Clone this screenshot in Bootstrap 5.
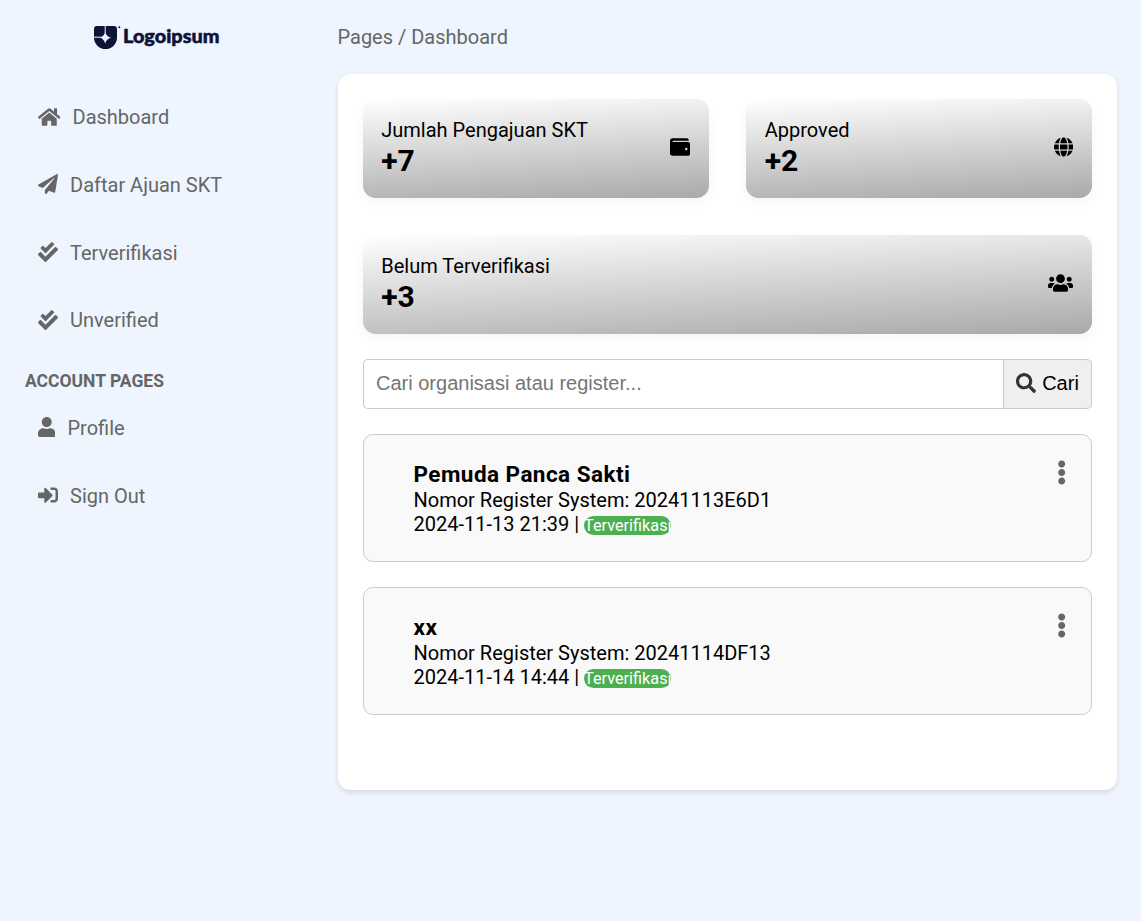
<!DOCTYPE html>
<html lang="id">
<head>
<meta charset="utf-8">
<meta name="viewport" content="width=device-width, initial-scale=1">
<title>Dashboard</title>
<link href="https://cdn.jsdelivr.net/npm/bootstrap@5.3.0/dist/css/bootstrap.min.css" rel="stylesheet">
<style>
  body { min-height: 100vh; background: #eef5ff; color: #000; font-family: Roboto, sans-serif; font-size: 20px; line-height: 24px; }
  .fa-glyph { height: 1em; fill: currentColor; flex: none; display: block; margin-bottom: 1px; }
  .side { width: 312.5px; padding: 0 25px; color: #666; }
  .brand { height: 74px; padding: 24px 0 0 68px; }
  .side .nav-link { color: #666; height: 67.7px; padding: 0 12.5px; gap: 12.5px; }
  .side-nav { padding-top: 9.4px; }
  .side-title { font-size: 17.5px; line-height: 20px; font-weight: 700; padding-top: 17px; margin-bottom: 3px; }
  .content { padding: 0 24px 0 25px; }
  .crumb { height: 74px; color: #666; }
  .panel { background: #fff; border-radius: 12.5px; padding: 25px; height: 716px; box-shadow: 0 2.5px 5px rgba(0,0,0,.1); }
  .stats { display: grid; grid-template-columns: 1fr 1fr; gap: 37.5px; }
  .stat { height: 98.5px; padding: 0 18.75px; border-radius: 12.5px; background: linear-gradient(177deg, #fff, #a9a9a9); box-shadow: 0 5px 12px rgba(0,0,0,.04); }
  .stat .fa-glyph { margin-bottom: 2.5px; }
  .stat-all { grid-column: 1 / -1; }
  .stat-value { font-size: 30px; line-height: 36px; font-weight: 700; padding-top: 1px; margin-bottom: -1px; }
  .search { height: 50px; margin: 25px 0; }
  .search .form-control { border: 1px solid #ccc; border-right: 0; border-radius: 5px 0 0 5px; font: 20px "Liberation Sans", sans-serif; padding: 0 12.5px 1px; color: #000; }
  .search .form-control::placeholder { color: #757575; }
  .search .btn { width: 89px; border: 1px solid #ccc; border-radius: 0 5px 5px 0; background: #efefef; color: #000; font: 20px "Liberation Sans", sans-serif; padding: 0 0 1px; gap: 6px; }
  .search .btn svg { color: #333; margin-bottom: 1px; }
  .org { height: 128px; margin-bottom: 25px; padding: 25px 22px 0 50px; border: 1px solid #ccc; border-radius: 10px; background: #f9f9f9; }
  .org-name { font-size: 22.5px; line-height: 28px; font-weight: 700; margin: 0; letter-spacing: .45px; }
  .org-more { font-size: 25px; color: #666; padding: 0; border: 0; background: none; height: 25px; width: 12px; }
  .tag { display: inline-block; width: 87px; height: 19px; border-radius: 10px; background: #4caf50; color: #fff; font-size: 16.25px; line-height: 19px; vertical-align: 0; margin-bottom: -4px; white-space: nowrap; }
</style>
</head>
<body>
<svg class="d-none">
  <symbol id="check" viewBox="0 0 512 512"><path d="M505 174.8l-39.6-39.6c-9.4-9.4-24.6-9.4-33.9 0L192 374.7 80.6 263.2c-9.4-9.4-24.6-9.4-33.9 0L7 302.9c-9.4 9.4-9.4 24.6 0 34L175 505c9.4 9.4 24.6 9.4 33.9 0l296-296.2c9.4-9.5 9.4-24.7.1-34zm-324.3 106c6.2 6.3 16.4 6.3 22.6 0l208-208.2c6.2-6.3 6.2-16.4 0-22.6L366.1 4.7c-6.2-6.3-16.4-6.3-22.6 0L192 156.2l-55.4-55.5c-6.2-6.3-16.4-6.3-22.6 0L68.7 146c-6.2 6.3-6.2 16.4 0 22.6l112 112.2z"/></symbol>
  <symbol id="dots" viewBox="0 0 192 512"><path d="M96 184c39.8 0 72 32.2 72 72s-32.2 72-72 72-72-32.2-72-72 32.2-72 72-72zM24 80c0 39.8 32.2 72 72 72s72-32.2 72-72S135.8 8 96 8 24 40.2 24 80zm0 352c0 39.8 32.2 72 72 72s72-32.2 72-72-32.2-72-72-72-72 32.2-72 72z"/></symbol>
</svg>
<div class="d-flex">
  <aside class="side flex-shrink-0">
    <div class="brand">
      <svg width="128" height="26" viewBox="0 0 128 26" class="d-block">
        <path fill="#0e1437" d="M4 2h17a3 3 0 0 1 3 3v8.500a11.500 11.500 0 0 1-23 0V5a3 3 0 0 1 3-3z"/>
        <path fill="none" stroke="#eef5ff" stroke-width="1" d="M12.200 1v8M0 13.200h8"/>
        <path fill="#eef5ff" d="M12.200 7.500Q13 12.600 18.200 13.700Q13.300 14.800 12.200 19.600Q11.100 14.800 6.500 13.500Q11.300 12.600 12.200 7.500z"/>
        <circle cx="26.300" cy="3.200" r="1" fill="#0e1437"/>
        <text x="30" y="19.200" textLength="96.500" lengthAdjust="spacingAndGlyphs" font-family="Lato, sans-serif" font-weight="900" font-size="18" fill="#0e1437" stroke="#0e1437" stroke-width=".5" stroke-linejoin="round">Logoipsum</text>
      </svg>
    </div>
    <nav class="nav flex-column side-nav">
      <a class="nav-link d-flex align-items-center" href="#"><svg class="fa-glyph" viewBox="0 0 576 512"><path d="M280.37 148.26L96 300.11V464a16 16 0 0 0 16 16l112.06-.29a16 16 0 0 0 15.92-16V368a16 16 0 0 1 16-16h64a16 16 0 0 1 16 16v95.640a16 16 0 0 0 16 16.050L464 480a16 16 0 0 0 16-16V300L295.670 148.260a12.190 12.190 0 0 0-15.300 0zM571.600 251.470L488 182.560V44.050a12 12 0 0 0-12-12h-56a12 12 0 0 0-12 12v72.610L318.470 43a48 48 0 0 0-61 0L4.340 251.470a12 12 0 0 0-1.600 16.900l25.500 31A12 12 0 0 0 45.150 301l235.220-193.740a12.190 12.190 0 0 1 15.300 0L530.900 301a12 12 0 0 0 16.900-1.600l25.500-31a12 12 0 0 0-1.700-16.930z"/></svg>Dashboard</a>
      <a class="nav-link d-flex align-items-center" href="#"><svg class="fa-glyph" viewBox="0 0 512 512"><path d="M476 3.200L12.500 270.600c-18.100 10.400-15.800 35.600 2.200 43.200L121 358.400l287.300-253.200c5.500-4.900 13.300 2.600 8.600 8.300L176 407v80.500c0 23.600 28.500 32.900 42.500 15.800L282 426l124.600 52.200c14.200 6 30.400-2.900 33-18.200l72-432C515 7.800 493.300-6.800 476 3.200z"/></svg>Daftar Ajuan SKT</a>
      <a class="nav-link d-flex align-items-center" href="#"><svg class="fa-glyph" viewBox="0 0 512 512"><use href="#check"/></svg>Terverifikasi</a>
      <a class="nav-link d-flex align-items-center" href="#"><svg class="fa-glyph" viewBox="0 0 512 512"><use href="#check"/></svg>Unverified</a>
    </nav>
    <div class="side-title">ACCOUNT PAGES</div>
    <nav class="nav flex-column">
      <a class="nav-link d-flex align-items-center" href="#"><svg class="fa-glyph" viewBox="0 0 448 512"><path d="M224 256c70.700 0 128-57.300 128-128S294.700 0 224 0 96 57.300 96 128s57.300 128 128 128zm89.600 32h-16.700c-22.200 10.200-46.900 16-72.900 16s-50.600-5.800-72.900-16h-16.700C60.200 288 0 348.200 0 422.400V464c0 26.500 21.500 48 48 48h352c26.500 0 48-21.500 48-48v-41.600c0-74.200-60.200-134.400-134.400-134.400z"/></svg>Profile</a>
      <a class="nav-link d-flex align-items-center" href="#"><svg class="fa-glyph" viewBox="0 0 512 512"><path d="M416 448h-84c-6.600 0-12-5.400-12-12v-40c0-6.600 5.400-12 12-12h84c17.700 0 32-14.300 32-32V160c0-17.700-14.300-32-32-32h-84c-6.600 0-12-5.400-12-12V76c0-6.600 5.400-12 12-12h84c53 0 96 43 96 96v192c0 53-43 96-96 96zm-47-201L201 79c-15-15-41-4.500-41 17v96H24c-13.300 0-24 10.700-24 24v96c0 13.300 10.700 24 24 24h136v96c0 21.500 26 32 41 17l168-168c9.300-9.400 9.300-24.600 0-34z"/></svg>Sign Out</a>
    </nav>
  </aside>
  <main class="content flex-grow-1">
    <div class="crumb d-flex align-items-center">Pages / Dashboard</div>
    <section class="panel">
      <div class="stats">
        <div class="stat d-flex align-items-center justify-content-between">
          <div><div>Jumlah Pengajuan SKT</div><div class="stat-value">+7</div></div>
          <svg class="fa-glyph" viewBox="0 0 512 512"><path d="M461.200 128H80c-8.840 0-16-7.160-16-16s7.160-16 16-16h384c8.840 0 16-7.160 16-16 0-26.510-21.490-48-48-48H64C28.650 32 0 60.650 0 96v320c0 35.350 28.650 64 64 64h397.200c28.020 0 50.800-21.530 50.800-48V176c0-26.470-22.780-48-50.800-48zM416 336c-17.670 0-32-14.330-32-32s14.330-32 32-32 32 14.330 32 32-14.330 32-32 32z"/></svg>
        </div>
        <div class="stat d-flex align-items-center justify-content-between">
          <div><div>Approved</div><div class="stat-value">+2</div></div>
          <svg class="fa-glyph" viewBox="0 0 496 512"><path d="M336.500 160C322 70.700 287.800 8 248 8s-74 62.700-88.500 152h177zM152 256c0 22.200 1.200 43.500 3.300 64h185.300c2.100-20.500 3.300-41.800 3.300-64s-1.200-43.500-3.300-64H155.300c-2.100 20.500-3.300 41.800-3.300 64zm324.700-96c-28.600-67.900-86.500-120.400-158-141.600 24.400 33.800 41.200 84.700 50 141.600h108zM177.200 18.400C105.800 39.600 47.800 92.100 19.300 160h108c8.700-56.900 25.500-107.800 49.900-141.600zM487.400 192H372.700c2.100 21 3.300 42.500 3.300 64s-1.200 43-3.300 64h114.600c5.500-20.500 8.600-41.800 8.600-64s-3.100-43.500-8.500-64zM120 256c0-21.500 1.200-43 3.300-64H8.600C3.200 212.500 0 233.800 0 256s3.200 43.500 8.600 64h114.600c-2-21-3.200-42.500-3.200-64zm39.500 96c14.500 89.300 48.700 152 88.500 152s74-62.700 88.500-152h-177zm159.300 141.600c71.400-21.200 129.400-73.700 158-141.600h-108c-8.800 56.900-25.600 107.800-50 141.600zM19.300 352c28.600 67.900 86.500 120.400 158 141.600-24.400-33.800-41.200-84.700-50-141.600h-108z"/></svg>
        </div>
        <div class="stat stat-all d-flex align-items-center justify-content-between">
          <div><div>Belum Terverifikasi</div><div class="stat-value">+3</div></div>
          <svg class="fa-glyph" viewBox="0 0 640 512"><path d="M96 224c35.300 0 64-28.700 64-64s-28.700-64-64-64-64 28.700-64 64 28.700 64 64 64zm448 0c35.300 0 64-28.700 64-64s-28.700-64-64-64-64 28.700-64 64 28.700 64 64 64zm32 32h-64c-17.600 0-33.500 7.100-45.100 18.600 40.300 22.100 68.900 62 75.100 109.400h66c17.700 0 32-14.300 32-32v-32c0-35.300-28.700-64-64-64zm-256 0c61.900 0 112-50.100 112-112S381.900 32 320 32 208 82.100 208 144s50.100 112 112 112zm76.800 32h-8.300c-20.800 10-43.900 16-68.500 16s-47.600-6-68.500-16h-8.300C179.600 288 128 339.600 128 403.200V432c0 26.500 21.500 48 48 48h288c26.500 0 48-21.500 48-48v-28.800c0-63.600-51.600-115.200-115.200-115.200zm-223.700-13.400C161.500 263.100 145.600 256 128 256H64c-35.300 0-64 28.700-64 64v32c0 17.700 14.300 32 32 32h65.900c6.300-47.400 34.900-87.300 75.200-109.400z"/></svg>
        </div>
      </div>
      <form class="search d-flex">
        <input class="form-control shadow-none" type="text" placeholder="Cari organisasi atau register...">
        <button class="btn d-flex align-items-center justify-content-center flex-shrink-0" type="button"><svg class="fa-glyph" viewBox="0 0 512 512"><path d="M505 442.700L405.300 343c-4.500-4.500-10.600-7-17-7H372c27.600-35.300 44-79.700 44-128C416 93.100 322.900 0 208 0S0 93.100 0 208s93.100 208 208 208c48.300 0 92.700-16.400 128-44v16.300c0 6.400 2.500 12.500 7 17l99.700 99.700c9.400 9.400 24.600 9.400 33.900 0l28.300-28.300c9.400-9.400 9.400-24.600.1-34zM208 336c-70.700 0-128-57.200-128-128 0-70.700 57.200-128 128-128 70.700 0 128 57.200 128 128 0 70.700-57.200 128-128 128z"/></svg>Cari</button>
      </form>
      <article class="org d-flex justify-content-between align-items-start">
        <div>
          <h3 class="org-name">Pemuda Panca Sakti</h3>
          <div>Nomor Register System: 20241113E6D1</div>
          <div>2024-11-13 21:39 | <span class="tag">Terverifikasi</span></div>
        </div>
        <button class="org-more" type="button" aria-label="Menu"><svg class="fa-glyph" viewBox="0 0 192 512"><use href="#dots"/></svg></button>
      </article>
      <article class="org d-flex justify-content-between align-items-start">
        <div>
          <h3 class="org-name">xx</h3>
          <div>Nomor Register System: 20241114DF13</div>
          <div>2024-11-14 14:44 | <span class="tag">Terverifikasi</span></div>
        </div>
        <button class="org-more" type="button" aria-label="Menu"><svg class="fa-glyph" viewBox="0 0 192 512"><use href="#dots"/></svg></button>
      </article>
    </section>
  </main>
</div>
<script src="https://cdn.jsdelivr.net/npm/bootstrap@5.3.0/dist/js/bootstrap.bundle.min.js"></script>
</body>
</html>
